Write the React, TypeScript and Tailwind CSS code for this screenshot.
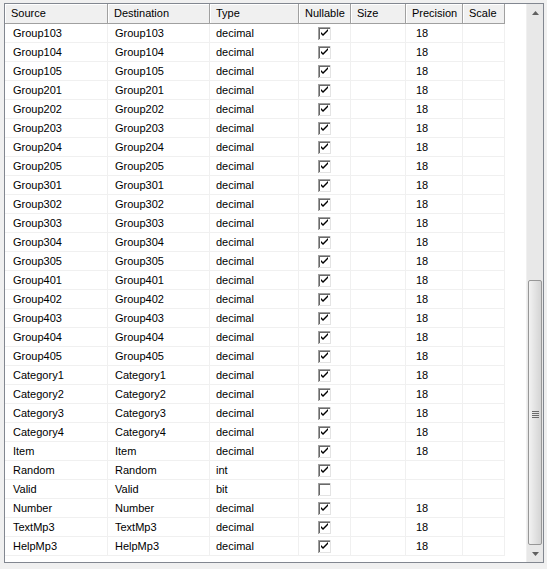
import React from 'react';

type Row = { src: string; type: string; nullable: boolean; precision?: string };

const groups = ['103', '104', '105', '201', '202', '203', '204', '205', '301', '302', '303', '304', '305', '401', '402', '403', '404', '405'];

const rows: Row[] = [
  ...groups.map((g) => ({ src: 'Group' + g, type: 'decimal', nullable: true, precision: '18' })),
  ...[1, 2, 3, 4].map((n) => ({ src: 'Category' + n, type: 'decimal', nullable: true, precision: '18' })),
  { src: 'Item', type: 'decimal', nullable: true, precision: '18' },
  { src: 'Random', type: 'int', nullable: true },
  { src: 'Valid', type: 'bit', nullable: false },
  { src: 'Number', type: 'decimal', nullable: true, precision: '18' },
  { src: 'TextMp3', type: 'decimal', nullable: true, precision: '18' },
  { src: 'HelpMp3', type: 'decimal', nullable: true, precision: '18' },
];

const cols = [
  { name: 'Source', w: 'w-[103px]' },
  { name: 'Destination', w: 'w-[102px]' },
  { name: 'Type', w: 'w-[89px]' },
  { name: 'Nullable', w: 'w-[52px]' },
  { name: 'Size', w: 'w-[55px]' },
  { name: 'Precision', w: 'w-[57px]' },
  { name: 'Scale', w: 'w-[42px]' },
];

const CheckBox = ({ checked }: { checked: boolean }) => (
  <svg width="13" height="13" viewBox="0 0 13 13" shapeRendering="crispEdges">
    <rect x="0" y="0" width="13" height="13" fill="#ffffff" />
    <path d="M0 12.5V0.5H12.5" stroke="#a0a0a0" fill="none" />
    <path d="M1 11.5V1.5H11.5" stroke="#696969" fill="none" />
    <path d="M0.5 12.5H12.5V0" stroke="#e3e3e3" fill="none" />
    {checked && (
      <path d="M3 5v2l2 2 5-5v-2l-5 5z" fill="#000000" stroke="none" shapeRendering="auto" />
    )}
  </svg>
);

const Cell = ({ w, children, className = '' }: { w: string; children?: React.ReactNode; className?: string }) => (
  <div className={`${w} shrink-0 h-full flex items-center border-r border-b border-[#f0f0f0] ${className}`}>{children}</div>
);

const App: React.FC = () => {
  return (
    <div className="w-[547px] h-[569px] bg-[#f0f0f0] pt-[3px] pl-[4px] text-[11px] text-black" style={{ fontFamily: '"Liberation Sans", Arial, sans-serif' }}>
      <div className="w-[540px] h-[560px] border border-[#828790] bg-white flex">
        <div className="flex-1 flex flex-col overflow-hidden">
          <div className="h-[20px] flex shrink-0">
            {cols.map((c) => (
              <div
                key={c.name}
                className={`${c.w} shrink-0 h-full bg-[#f0f0f0] border-r border-b border-r-[#a0a0a0] border-b-[#a0a0a0] shadow-[inset_1px_1px_0_#ffffff] flex items-center pl-[6px]`}
              >
                {c.name}
              </div>
            ))}
          </div>
          {rows.map((r) => (
            <div key={r.src} className="h-[19px] flex shrink-0">
              <Cell w="w-[103px]" className="pl-[8px]">{r.src}</Cell>
              <Cell w="w-[102px]" className="pl-[7px]">{r.src}</Cell>
              <Cell w="w-[89px]" className="pl-[6px]">{r.type}</Cell>
              <Cell w="w-[52px]" className="justify-center">
                <CheckBox checked={r.nullable} />
              </Cell>
              <Cell w="w-[55px]" />
              <Cell w="w-[57px]" className="pl-[10px]">{r.precision}</Cell>
              <Cell w="w-[42px]" />
            </div>
          ))}
        </div>
        <div className="w-[17px] shrink-0 flex flex-col bg-[#e8e8e8] border-l border-[#f0f0f0]">
          <div className="h-[17px] shrink-0 flex items-center justify-center">
            <svg width="7" height="4" viewBox="0 0 7 4"><path d="M0 4L3.5 0L7 4z" fill="#606060" /></svg>
          </div>
          <div className="h-[259px] shrink-0" />
          <div className="flex-1 mx-[1px] rounded-[2px] border border-[#979797] bg-gradient-to-r from-[#f2f2f2] via-[#e3e3e3] to-[#d4d4d4] flex flex-col items-center justify-center gap-[1px] pt-[4px]">
            {[0, 1, 2, 3].map((i) => (
              <div key={i} className="w-[7px] h-[1px] bg-[#6a6a6a]" />
            ))}
          </div>
          <div className="h-[17px] shrink-0 flex items-center justify-center">
            <svg width="7" height="4" viewBox="0 0 7 4"><path d="M0 0L3.5 4L7 0z" fill="#606060" /></svg>
          </div>
        </div>
      </div>
    </div>
  );
};

export default App;
